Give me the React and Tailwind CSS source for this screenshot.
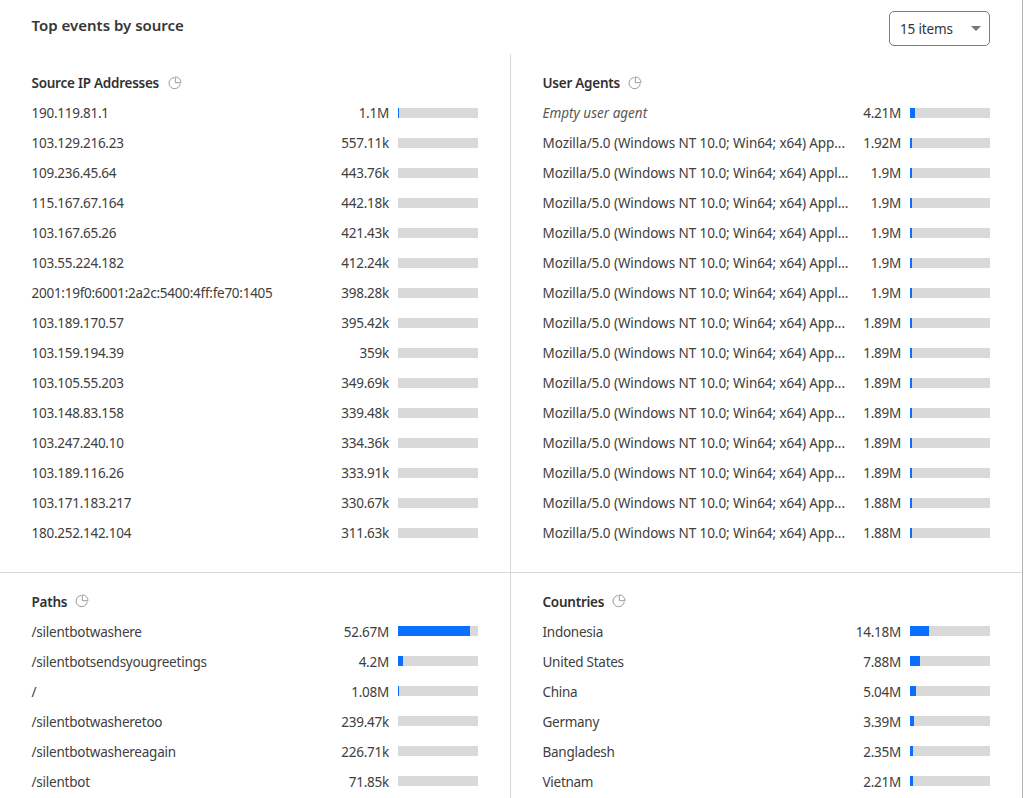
const ips = [
  ["190.119.81.1", "1.1M", 1],
  ["103.129.216.23", "557.11k", 0],
  ["109.236.45.64", "443.76k", 0],
  ["115.167.67.164", "442.18k", 0],
  ["103.167.65.26", "421.43k", 0],
  ["103.55.224.182", "412.24k", 0],
  ["2001:19f0:6001:2a2c:5400:4ff:fe70:1405", "398.28k", 0],
  ["103.189.170.57", "395.42k", 0],
  ["103.159.194.39", "359k", 0],
  ["103.105.55.203", "349.69k", 0],
  ["103.148.83.158", "339.48k", 0],
  ["103.247.240.10", "334.36k", 0],
  ["103.189.116.26", "333.91k", 0],
  ["103.171.183.217", "330.67k", 0],
  ["180.252.142.104", "311.63k", 0],
];

const UA = "Mozilla/5.0 (Windows NT 10.0; Win64; x64) App...";
const UAL = "Mozilla/5.0 (Windows NT 10.0; Win64; x64) Appl...";

const agents = [
  ["Empty user agent", "4.21M", 5],
  [UA, "1.92M", 2],
  [UAL, "1.9M", 2],
  [UAL, "1.9M", 2],
  [UAL, "1.9M", 2],
  [UAL, "1.9M", 2],
  [UAL, "1.9M", 2],
  [UA, "1.89M", 2],
  [UA, "1.89M", 2],
  [UA, "1.89M", 2],
  [UA, "1.89M", 2],
  [UA, "1.89M", 2],
  [UA, "1.89M", 2],
  [UA, "1.88M", 2],
  [UA, "1.88M", 2],
];

const paths = [
  ["/silentbotwashere", "52.67M", 72],
  ["/silentbotsendsyougreetings", "4.2M", 5],
  ["/", "1.08M", 1],
  ["/silentbotwasheretoo", "239.47k", 0],
  ["/silentbotwashereagain", "226.71k", 0],
  ["/silentbot", "71.85k", 0],
];

const countries = [
  ["Indonesia", "14.18M", 19],
  ["United States", "7.88M", 10],
  ["China", "5.04M", 6],
  ["Germany", "3.39M", 4],
  ["Bangladesh", "2.35M", 3],
  ["Vietnam", "2.21M", 3],
];

function PieIcon({ className }) {
  return (
    <svg className={className} width="14" height="14" viewBox="0 0 14 14" fill="none" stroke="#9a9a9a" strokeWidth="1">
      <path d="M6.2 1.5A5.6 5.6 0 1 0 12.2 7.8" />
      <path d="M7.3 .9V6.7H13A5.8 5.8 0 0 0 7.3 .9Z" />
    </svg>
  );
}

function Panel({ title, rows, className, iconClass, barClass, textClass }) {
  return (
    <section className={className}>
      <h3 className="flex h-[30px] items-center text-[13.5px] font-semibold text-[#313131]">
        <span className="tracking-[-0.25px]">{title}</span>
        <PieIcon className={iconClass} />
      </h3>
      <ul>
        {rows.map(([label, value, fill], i) => (
          <li key={i} className="flex h-[30px] items-center">
            <span
              className={
                label.startsWith("Empty")
                  ? "flex-1 whitespace-nowrap italic text-[#595959]"
                  : textClass
              }
            >
              {label}
            </span>
            <span className="mr-[9px] tracking-[-0.24px]">{value}</span>
            <span className={barClass}>
              <span className="block h-full bg-[#0a6fff]" style={{ width: fill }} />
            </span>
          </li>
        ))}
      </ul>
    </section>
  );
}

export default function App() {
  return (
    <div className="h-[798px] w-[1029px] overflow-hidden bg-white font-['Noto_Sans','Open_Sans',sans-serif] text-[13.5px] text-[#404040]">
      <div className="h-full w-[1023px] border-r border-[#b3b3b3]">
        <header className="flex h-[54px] items-start justify-between pr-8 pl-[31.5px]">
          <h2 className="pt-[13px] text-[15px] leading-6 font-semibold text-[#363636]">Top events by source</h2>
          <button className="mt-[11px] flex h-[35px] w-[101px] items-center justify-between rounded-[5px] border border-[#797c80] pr-2 pl-[10px] text-[#333]">
            <span className="pt-[2px] tracking-[-0.15px]">15 items</span>
            <svg width="10" height="5" viewBox="0 0 10 5">
              <path d="M0 0H10L5 5Z" fill="#72767a" />
            </svg>
          </button>
        </header>
        <div className="grid h-[519px] grid-cols-2 border-b border-[#d9d9d9]">
          <Panel
            title="Source IP Addresses"
            rows={ips}
            className="border-r border-[#d9d9d9] pt-[14px] pr-8 pl-[31.5px]"
            iconClass="ml-[9px]"
            barClass="h-[10px] w-20 bg-[#d9d9d9]"
            textClass="flex-1 whitespace-nowrap tracking-[-0.26px]"
          />
          <Panel
            title="User Agents"
            rows={agents}
            className="pt-[14px] pr-8 pl-[31.5px]"
            iconClass="ml-2"
            barClass="h-[10px] w-20 bg-[#d9d9d9]"
            textClass="flex-1 whitespace-nowrap tracking-[-0.07px]"
          />
        </div>
        <div className="grid h-[225px] grid-cols-2">
          <Panel
            title="Paths"
            rows={paths}
            className="border-r border-[#d9d9d9] pt-[14px] pr-8 pl-[31.5px]"
            iconClass="mb-[2px] ml-2"
            barClass="mb-[2px] h-[10px] w-20 bg-[#d9d9d9]"
            textClass="flex-1 whitespace-nowrap tracking-[-0.23px]"
          />
          <Panel
            title="Countries"
            rows={countries}
            className="pt-[14px] pr-8 pl-[31.5px]"
            iconClass="mb-[2px] ml-2"
            barClass="mb-[2px] h-[10px] w-20 bg-[#d9d9d9]"
            textClass="flex-1 whitespace-nowrap tracking-[-0.27px]"
          />
        </div>
      </div>
    </div>
  );
}
